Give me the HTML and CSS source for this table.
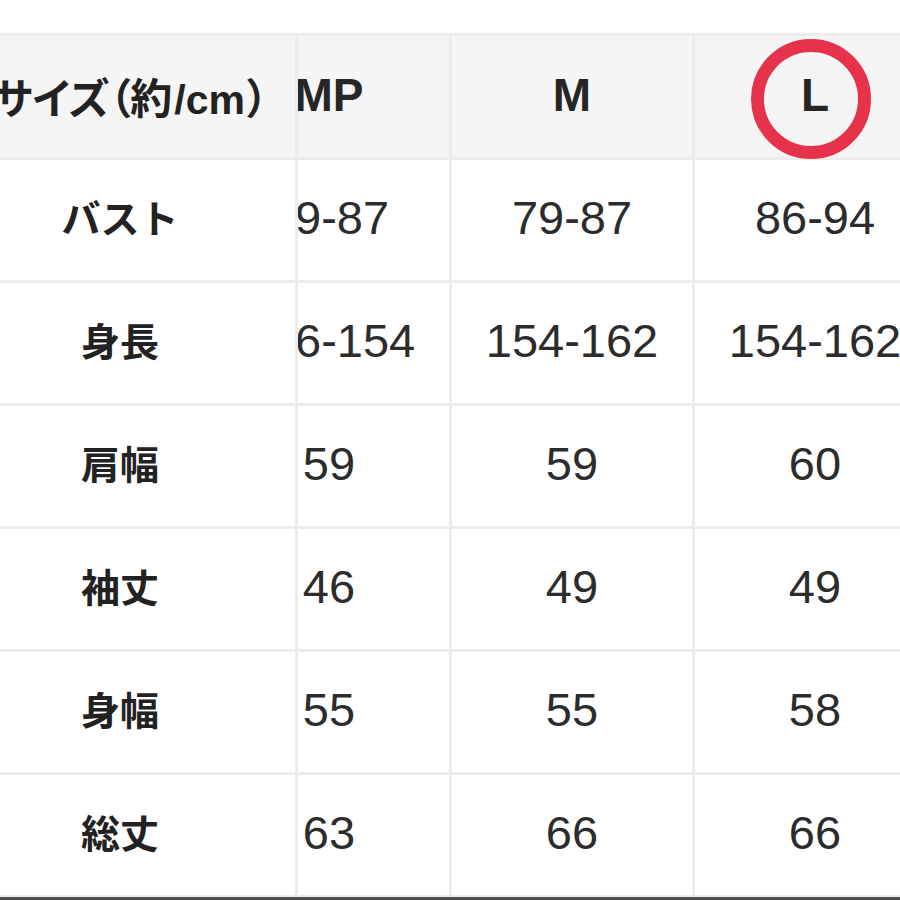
FILE: index.html
```html
<!DOCTYPE html>
<html lang="ja">
<head>
<meta charset="utf-8">
<title>サイズ表</title>
<link rel="stylesheet" href="styles.css">
</head>
<body>
<div class="page">
  <div class="table">
    <div class="cell head c1"><div class="in label">サイズ（約<span class="unit">/cm</span>）</div></div>
    <div class="cell head c2"><div class="in">MP</div></div>
    <div class="cell head c3"><div class="in">M</div></div>
    <div class="cell head c4"><div class="in">L</div><span class="ring"></span></div>

    <div class="cell c1"><div class="in jp">バスト</div></div>
    <div class="cell c2"><div class="in num">79-87</div></div>
    <div class="cell c3"><div class="in num">79-87</div></div>
    <div class="cell c4"><div class="in num">86-94</div></div>

    <div class="cell c1"><div class="in jp">身長</div></div>
    <div class="cell c2"><div class="in num">146-154</div></div>
    <div class="cell c3"><div class="in num">154-162</div></div>
    <div class="cell c4"><div class="in num">154-162</div></div>

    <div class="cell c1"><div class="in jp">肩幅</div></div>
    <div class="cell c2"><div class="in num">59</div></div>
    <div class="cell c3"><div class="in num">59</div></div>
    <div class="cell c4"><div class="in num">60</div></div>

    <div class="cell c1"><div class="in jp">袖丈</div></div>
    <div class="cell c2"><div class="in num">46</div></div>
    <div class="cell c3"><div class="in num">49</div></div>
    <div class="cell c4"><div class="in num">49</div></div>

    <div class="cell c1"><div class="in jp">身幅</div></div>
    <div class="cell c2"><div class="in num">55</div></div>
    <div class="cell c3"><div class="in num">55</div></div>
    <div class="cell c4"><div class="in num">58</div></div>

    <div class="cell c1"><div class="in jp">総丈</div></div>
    <div class="cell c2"><div class="in num">63</div></div>
    <div class="cell c3"><div class="in num">66</div></div>
    <div class="cell c4"><div class="in num">66</div></div>
  </div>
  <div class="bar"></div>
</div>
</body>
</html>
```

FILE: styles.css
```css
html, body {
  margin: 0;
  padding: 0;
  background: #ffffff;
}

.page {
  width: 900px;
  height: 900px;
  overflow: hidden;
  padding-top: 33px;
  box-sizing: border-box;
  font-family: "Liberation Sans", "Noto Sans CJK JP", sans-serif;
  color: #262626;
}

.table {
  display: grid;
  grid-template-columns: 295px 151px 240px 240px;
  grid-template-rows: 121px repeat(6, 120px);
  gap: 3px;
  width: 935px;
  background: #ececec;
  border-top: 3px solid #ececec;
}

.cell {
  display: flex;
  align-items: center;
  overflow: hidden;
  background: #ffffff;
}

.head {
  background: #f5f5f5;
  font-weight: 700;
  font-size: 46px;
}

.head .in {
  margin-top: -3px;
}

.in {
  flex: none;
  text-align: center;
  white-space: nowrap;
}

.c1 .in {
  width: 350px;
  margin-left: -55px;
}

.c1 .label {
  width: 400px;
  margin-left: -105px;
  padding-right: 27px;
  box-sizing: border-box;
  text-align: right;
  font-family: "Noto Sans CJK JP", sans-serif;
  font-size: 42px;
  font-feature-settings: "palt";
  color: #222222;
}

.unit {
  font-family: "Liberation Sans", sans-serif;
  font-weight: 700;
  font-size: 41px;
  margin: 0 2px;
}

.c2 .in {
  width: 240px;
  margin-left: -89px;
}

.c3 .in,
.c4 .in {
  width: 240px;
}

.jp {
  font-family: "Noto Sans CJK JP", sans-serif;
  font-weight: 700;
  font-size: 39px;
  color: #222222;
  margin-top: -8px;
}

.num {
  font-size: 47px;
  font-weight: 400;
  color: #2c2c2c;
  margin-top: -5px;
}

.c4.head {
  position: relative;
  overflow: visible;
}

.ring {
  position: absolute;
  left: 56px;
  top: 3px;
  width: 120px;
  height: 120px;
  box-sizing: border-box;
  border: 13px solid #e6324b;
  border-radius: 50%;
  z-index: 1;
}

.bar {
  border-top: 2px solid #ececec;
  height: 3px;
  background: #4d4d4d;
}
```
